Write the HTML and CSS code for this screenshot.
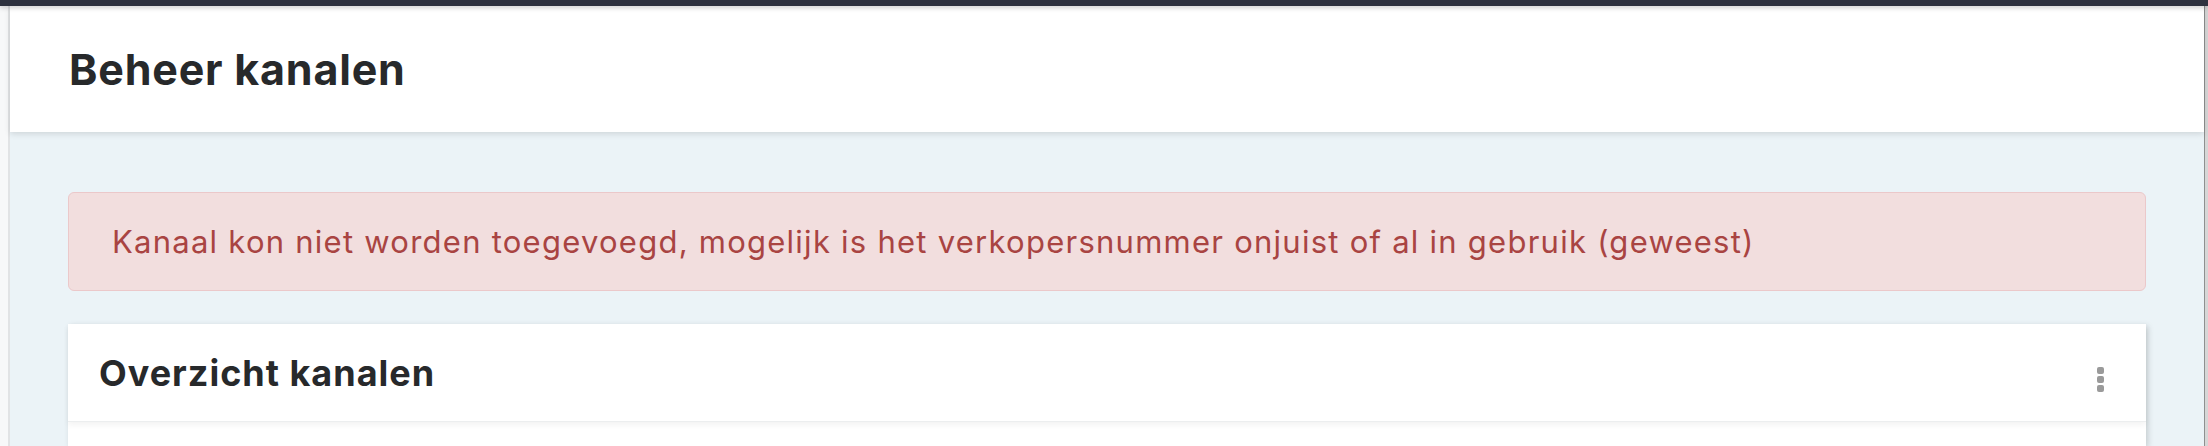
FILE: index.html
```html
<!DOCTYPE html>
<html lang="nl">
<head>
<meta charset="utf-8">
<title>Beheer kanalen</title>
<link rel="stylesheet" href="styles.css">
</head>
<body>
<div class="topbar"></div>
<div class="app">
  <aside class="rail"></aside>
  <div class="main">
    <header class="page-header">
      <h1 class="page-title">Beheer kanalen</h1>
    </header>
    <section class="content">
      <div class="alert">Kanaal kon niet worden toegevoegd, mogelijk is het verkopersnummer onjuist of al in gebruik (geweest)</div>
      <div class="card">
        <div class="card-header">
          <h2 class="card-title">Overzicht kanalen</h2>
          <button class="kebab" aria-label="Meer opties"><span></span><span></span><span></span></button>
        </div>
        <div class="card-body"></div>
      </div>
    </section>
  </div>
  <div class="scrollbar"></div>
</div>
</body>
</html>
```
FILE: styles.css
```css
* { box-sizing: border-box; }
html, body { margin: 0; padding: 0; height: 100%; overflow: hidden; }
body {
  font-family: Inter, "Noto Sans", sans-serif;
  background: #ebf3f7;
  color: #27292b;
}
.topbar {
  height: 6px;
  background: #2e323f;
  position: relative;
  z-index: 3;
  box-shadow: 0 2px 5px rgba(0,0,0,0.18);
}
.app {
  display: flex;
  min-height: calc(100vh - 6px);
}
.rail {
  width: 10px;
  flex: none;
  background: #f7f8f9;
  border-right: 2px solid #e1e3e5;
}
.main {
  flex: 1;
  display: flex;
  flex-direction: column;
  background: #ebf3f7;
}
.scrollbar {
  width: 4px;
  flex: none;
  background: #d6d6d6;
  border-left: 1px solid #8f8f8f;
}
.page-header {
  height: 126px;
  background: #fff;
  display: flex;
  align-items: center;
  padding-left: 59px;
  position: relative;
  z-index: 2;
  box-shadow: 0 2px 6px rgba(0,0,0,0.12);
}
.page-title {
  margin: 0;
  font-size: 43px;
  font-weight: 700;
  letter-spacing: 0.8px;
  color: #27292b;
}
.content {
  padding: 60px 58px 0 58px;
  flex: 1;
  display: flex;
  flex-direction: column;
}
.alert {
  background: #f2dede;
  border: 1px solid #ebc8ca;
  border-radius: 6px;
  color: #a94442;
  font-size: 31px;
  letter-spacing: 1.25px;
  line-height: 45px;
  padding: 26px 43px;
}
.card {
  margin-top: 33px;
  background: #fff;
  box-shadow: 2px 2px 6px rgba(0,0,0,0.16);
  flex: 1;
  display: flex;
  flex-direction: column;
}
.card-header {
  height: 98px;
  display: flex;
  align-items: center;
  justify-content: space-between;
  padding: 0 42px 0 31px;
  border-bottom: 1px solid #eceeef;
  box-shadow: 0 3px 6px rgba(0,0,0,0.05);
  position: relative;
}
.card-title {
  margin: 0;
  font-size: 36px;
  font-weight: 700;
  letter-spacing: 1px;
  color: #27292b;
}
.kebab {
  border: 0;
  background: none;
  padding: 0;
  margin-top: 13px;
  display: flex;
  flex-direction: column;
  gap: 2px;
  cursor: pointer;
}
.kebab span {
  width: 7px;
  height: 7px;
  border-radius: 2px;
  background: #9a9a9a;
}
.card-body { flex: 1; }
```
